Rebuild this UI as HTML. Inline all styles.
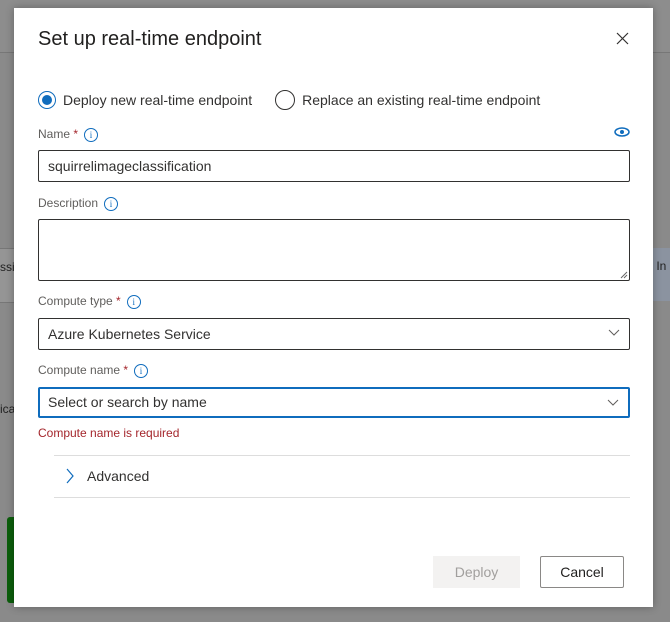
<!DOCTYPE html>
<html><head><style>
body{margin:0;width:670px;height:622px;background:#8a8a8a;font-family:"Liberation Sans",sans-serif;position:relative;overflow:hidden;color:#323130}
.a{position:absolute}
.m{left:14px;top:8px;width:639px;height:599px;background:#fff;box-shadow:0 0 8px rgba(0,0,0,.3)}
.lbl{font-size:12px;color:#605e5c}
.star{color:#a4262c}
.info{display:inline-block;width:12px;height:12px;border:1px solid #0f6cbd;border-radius:50%;font-size:9px;color:#0f6cbd;text-align:center;line-height:12px;vertical-align:middle;margin-left:6px;font-family:"Liberation Serif",serif}
.box{left:24px;width:592px;border:1px solid #323130;border-radius:2px;box-sizing:border-box;font-size:14px;padding-left:9px}
.chev{position:absolute;right:9px;top:10px}
</style></head><body>
<div class="a" style="left:0;top:0;width:670px;height:52px;background:#8d8d8d;border-bottom:1px solid #777"></div>
<div class="a" style="left:0;top:248px;width:14px;height:53px;background:#959595;border-top:1px solid #777;border-bottom:1px solid #777;font-size:12px;line-height:36px;color:#222">ssi</div>
<div class="a" style="left:653px;top:248px;width:17px;height:53px;background:#8b93a0;font-size:12px;line-height:36px;color:#222">&nbsp;In</div>
<div class="a" style="left:0;top:402px;font-size:12px;color:#222">ica</div>
<div class="a" style="left:7px;top:517px;width:7px;height:86px;background:#0b5e0b;border-radius:3px 0 0 3px"></div>
<div class="a m">
<div class="a" style="left:24px;top:20px;font-size:20px;color:#201f1e">Set up real-time endpoint</div>
<svg class="a" style="left:602px;top:24px" width="13" height="13"><path d="M1 1L12 12M12 1L1 12" stroke="#323130" stroke-width="1.2"/></svg>
<div class="a" style="left:24px;top:82px;font-size:14px;display:flex;align-items:center">
<span style="width:18px;height:18px;border:1px solid #0f6cbd;border-radius:50%;box-sizing:border-box;display:inline-flex;align-items:center;justify-content:center"><span style="width:10px;height:10px;border-radius:50%;background:#0f6cbd"></span></span>
<span style="margin-left:7px">Deploy new real-time endpoint</span>
<span style="width:20px;height:20px;border:1px solid #323130;border-radius:50%;box-sizing:border-box;margin-left:23px"></span>
<span style="margin-left:7px">Replace an existing real-time endpoint</span></div>
<div class="a lbl" style="left:24px;top:119px">Name <span class="star">*</span><span class="info">i</span></div>
<svg class="a" style="left:600px;top:119px" width="16" height="10"><ellipse cx="8" cy="5" rx="7" ry="4" fill="none" stroke="#0f6cbd" stroke-width="1.5"/><circle cx="8" cy="5" r="2" fill="#0f6cbd"/></svg>
<div class="a box" style="top:142px;height:32px;line-height:30px">squirrelimageclassification</div>
<div class="a lbl" style="left:24px;top:188px">Description<span class="info">i</span></div>
<div class="a box" style="top:211px;height:62px"><svg style="position:absolute;right:1px;bottom:1px" width="8" height="8"><path d="M7 1L1 7M7 4L4 7" stroke="#666"/></svg></div>
<div class="a lbl" style="left:24px;top:286px">Compute type <span class="star">*</span><span class="info">i</span></div>
<div class="a box" style="top:310px;height:32px;line-height:30px">Azure Kubernetes Service<svg class="chev" width="12" height="8"><path d="M1 1L6 6L11 1" fill="none" stroke="#605e5c"/></svg></div>
<div class="a lbl" style="left:24px;top:355px">Compute name <span class="star">*</span><span class="info">i</span></div>
<div class="a box" style="top:379px;height:31px;line-height:27px;border:2px solid #0f6cbd;padding-left:8px;color:#323130">Select or search by name<svg class="chev" width="12" height="8" style="top:10px"><path d="M1 1L6 6L11 1" fill="none" stroke="#605e5c"/></svg></div>
<div class="a" style="left:24px;top:418px;font-size:12px;color:#a4262c">Compute name is required</div>
<div class="a" style="left:40px;top:447px;width:576px;height:41px;border-top:1px solid #ddd;border-bottom:1px solid #ddd"></div>
<svg class="a" style="left:52px;top:460px" width="8" height="16"><path d="M1 1L7 8L1 15" fill="none" stroke="#0f6cbd" stroke-width="1.2"/></svg>
<div class="a" style="left:73px;top:460px;font-size:14px">Advanced</div>
<div class="a" style="left:419px;top:548px;width:87px;height:32px;background:#f3f2f1;color:#a19f9d;font-size:14px;text-align:center;line-height:32px">Deploy</div>
<div class="a" style="left:526px;top:548px;width:84px;height:32px;border:1px solid #8a8886;box-sizing:border-box;border-radius:2px;font-size:14px;text-align:center;line-height:30px;color:#201f1e">Cancel</div>
</div>
</body></html>
